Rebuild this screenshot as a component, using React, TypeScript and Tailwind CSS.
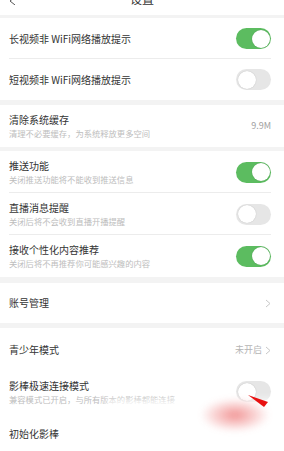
import type { ReactNode } from "react";

const font = { fontFamily: '"Noto Sans CJK SC", "Noto Sans", sans-serif' };

function Toggle({ on }: { on: boolean }) {
  return (
    <div
      className={`relative w-[35px] h-[21px] rounded-full flex-shrink-0 ${
        on ? "bg-[#5cbc60]" : "bg-[#e6e6e6]"
      }`}
    >
      <div
        className={`absolute top-[1.5px] w-[18px] h-[18px] rounded-full bg-white shadow-[0_0_1px_rgba(0,0,0,0.25)] ${
          on ? "right-[1.5px]" : "left-[1.5px]"
        }`}
      />
    </div>
  );
}

function Chevron() {
  return (
    <svg width="6" height="9" viewBox="0 0 6 9" className="flex-shrink-0">
      <polyline points="1,1 5,4.5 1,8" fill="none" stroke="#c8c8c8" strokeWidth="1" />
    </svg>
  );
}

function Row({
  title,
  sub,
  right,
  h = "h-[42px]",
  divider = false,
}: {
  title: string;
  sub?: string;
  right?: ReactNode;
  h?: string;
  divider?: boolean;
}) {
  return (
    <div className={`relative flex items-center justify-between pl-[9px] pr-[13px] ${h}`}>
      <div className="flex flex-col">
        <span className="text-[10px] leading-[12px] text-[#333]">{title}</span>
        {sub && (
          <span className="text-[8.3px] leading-[10px] mt-[2px] text-[#bdbdbd]">{sub}</span>
        )}
      </div>
      {right}
      {divider && (
        <div className="absolute bottom-0 left-[9px] right-[13px] h-px bg-[#ececec]" />
      )}
    </div>
  );
}

function Gap({ h }: { h: string }) {
  return <div className={`${h} bg-[#f3f3f3]`} />;
}

export default function App() {
  return (
    <main className="relative w-[284px] h-[451px] overflow-hidden bg-white" style={font}>
      {/* Header */}
      <div className="relative h-[15px] overflow-hidden flex justify-center">
        <svg width="8" height="8" viewBox="0 0 8 8" className="absolute left-[8px] top-[-3px]">
          <polyline points="7,0 2,4 7,8" fill="none" stroke="#555" strokeWidth="1" />
        </svg>
        <span className="text-[12px] leading-[12px] mt-[-7px] text-[#333]">设置</span>
      </div>
      <Gap h="h-[3px]" />

      <div>
        <Row title="长视频非 WiFi网络播放提示" h="h-[41px]" divider right={<Toggle on />} />
        <Row title="短视频非 WiFi网络播放提示" h="h-[41px]" right={<Toggle on={false} />} />
      </div>
      <Gap h="h-[5px]" />

      <Row
        title="清除系统缓存"
        sub="清理不必要缓存，为系统释放更多空间"
        right={<span className="text-[9px] text-[#a0a0a0]">9.9M</span>}
      />
      <Gap h="h-[4px]" />

      <div>
        <Row title="推送功能" sub="关闭推送功能将不能收到推送信息" divider right={<Toggle on />} />
        <Row title="直播消息提醒" sub="关闭后将不会收到直播开播提醒" divider right={<Toggle on={false} />} />
        <Row title="接收个性化内容推荐" sub="关闭后将不再推荐你可能感兴趣的内容" right={<Toggle on />} />
      </div>
      <Gap h="h-[6px]" />

      <Row title="账号管理" h="h-[40px]" right={<Chevron />} />
      <Gap h="h-[5px]" />

      <div>
        <Row
          title="青少年模式"
          h="h-[44px]"
          right={
            <div className="flex items-center gap-[3px]">
              <span className="text-[9px] text-[#b5b5b5]">未开启</span>
              <Chevron />
            </div>
          }
        />
        <Row
          title="影棒极速连接模式"
          sub="兼容模式已开启，与所有版本的影棒都能连接"
          h="h-[39px]"
          right={<Toggle on={false} />}
        />
        <Row title="初始化影棒" h="h-[46px]" />
      </div>

      {/* annotation overlay */}
      <div className="absolute left-[105px] top-[400px] w-[190px] h-[60px] bg-white/95 blur-[4px]" />
      <div className="absolute left-[200px] top-[398px] w-[70px] h-[34px] rounded-full bg-[radial-gradient(ellipse_at_center,rgba(230,60,60,0.55),rgba(255,255,255,0)_70%)] blur-[3px]" />
      <svg width="24" height="16" viewBox="0 0 24 16" className="absolute left-[246px] top-[393px]">
        <polygon points="2,2 22,9 18,14" fill="#e81010" />
      </svg>
    </main>
  );
}
